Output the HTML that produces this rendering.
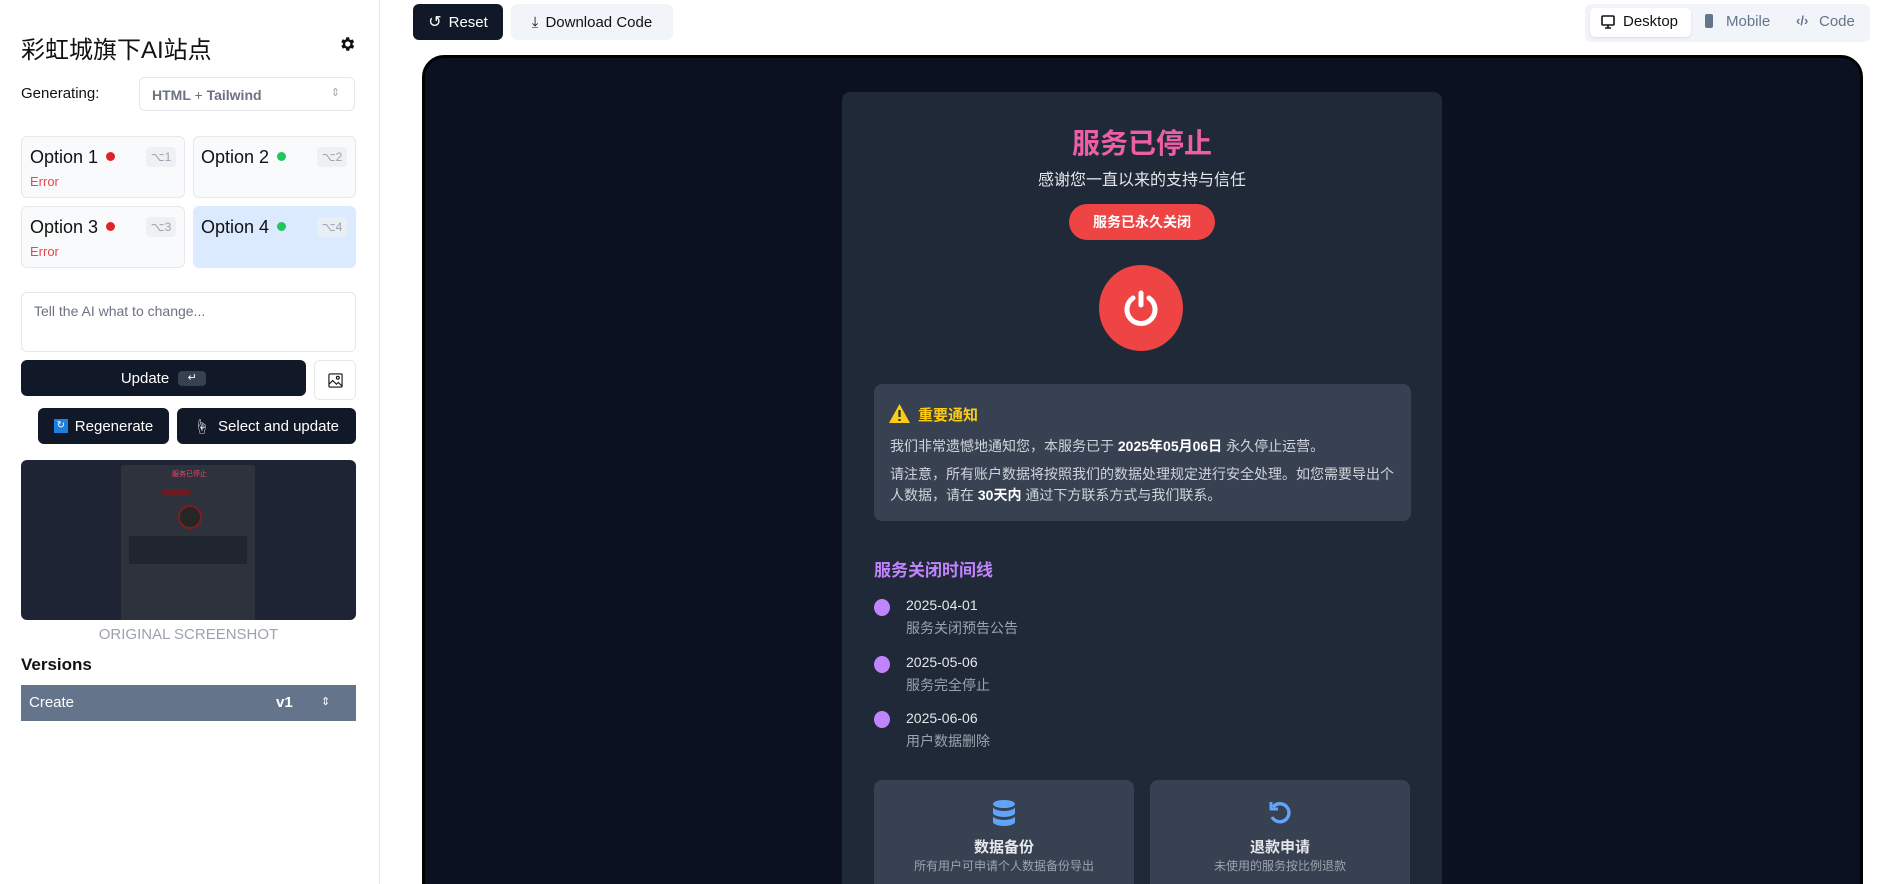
<!DOCTYPE html>
<html><head><meta charset="utf-8"><style>
*{box-sizing:border-box;margin:0;padding:0}
html,body{width:1886px;height:884px;overflow:hidden}
body{background:#fff;font-family:"Liberation Sans","Noto Sans CJK SC",sans-serif;color:#111}
#w{position:relative;width:1886px;height:884px;overflow:hidden}
.a{position:absolute}
.side{left:0;top:0;width:380px;height:884px;border-right:1px solid #e5e7eb}
.card{border:1px solid #e5e7eb;border-radius:6px;background:#f8fafc}
.opt{font-size:18px;color:#111}
.dot{display:inline-block;width:9px;height:9px;border-radius:50%;margin-left:8px;vertical-align:middle;position:relative;top:-2px}
.kbd{background:#eef0f3;color:#9ca3af;font-size:12px;border-radius:4px;width:30px;height:20px;text-align:center;line-height:20px}
.err{color:#ef4444;font-size:13px}
.btn{background:#111827;color:#fff;border-radius:6px;font-size:15px;display:flex;align-items:center;justify-content:center}
.cjk{font-family:"Liberation Sans","Noto Sans CJK SC",sans-serif}
.tl{color:#e5e7eb;font-size:14px}
.td{color:#9ca3af;font-size:14px}
</style></head><body><div id="w">
<div class="a side"></div>
<div class="a" style="left:21px;top:30px;font-size:24px;color:#111">彩虹城旗下AI站点</div>
<svg class="a" style="left:338px;top:35px" width="18" height="18" viewBox="0 0 24 24"><path fill="#111" d="M19.4 13a7.5 7.5 0 000-2l2.1-1.6-2-3.5-2.5 1a7.6 7.6 0 00-1.7-1L15 3h-4l-.4 2.7a7.6 7.6 0 00-1.7 1l-2.5-1-2 3.5L6.6 11a7.5 7.5 0 000 2l-2.1 1.6 2 3.5 2.5-1a7.6 7.6 0 001.7 1L11 21h4l.4-2.7a7.6 7.6 0 001.7-1l2.5 1 2-3.5zM13 15.5a3.5 3.5 0 110-7 3.5 3.5 0 010 7z"/></svg>
<div class="a" style="left:21px;top:85px;font-size:15px">Generating:</div>
<div class="a" style="left:139px;top:77px;width:216px;height:34px;border:1px solid #e5e7eb;border-radius:6px;font-size:14px;font-weight:bold;color:#6b7280;padding:9px 12px">HTML <span style="font-weight:normal">+</span> Tailwind<span style="position:absolute;right:14px;top:8px;font-size:11px;color:#aaa;font-weight:normal">⇕</span></div>

<div class="a card" style="left:21px;top:136px;width:164px;height:62px"></div>
<div class="a opt" style="left:30px;top:147px">Option 1<span class="dot" style="background:#dc2626"></span></div>
<div class="a kbd" style="left:146px;top:147px">⌥1</div>
<div class="a err" style="left:30px;top:174px">Error</div>
<div class="a card" style="left:193px;top:136px;width:163px;height:62px"></div>
<div class="a opt" style="left:201px;top:147px">Option 2<span class="dot" style="background:#22c55e"></span></div>
<div class="a kbd" style="left:317px;top:147px">⌥2</div>
<div class="a card" style="left:21px;top:206px;width:164px;height:62px"></div>
<div class="a opt" style="left:30px;top:217px">Option 3<span class="dot" style="background:#dc2626"></span></div>
<div class="a kbd" style="left:146px;top:217px">⌥3</div>
<div class="a err" style="left:30px;top:244px">Error</div>
<div class="a card" style="left:193px;top:206px;width:163px;height:62px;background:#dbeafe;border-color:#dbeafe"></div>
<div class="a opt" style="left:201px;top:217px">Option 4<span class="dot" style="background:#22c55e"></span></div>
<div class="a kbd" style="left:317px;top:217px;background:#e9eef5">⌥4</div>

<div class="a" style="left:21px;top:292px;width:335px;height:60px;border:1px solid #e5e7eb;border-radius:6px;padding:10px 12px;font-size:14px;color:#6b7280">Tell the AI what to change...</div>
<div class="a btn" style="left:21px;top:360px;width:285px;height:36px">Update<span style="background:#374151;border-radius:4px;width:28px;height:15px;margin-left:9px;font-size:11px;line-height:15px;text-align:center">↵</span></div>
<div class="a" style="left:314px;top:360px;width:42px;height:40px;border:1px solid #e5e7eb;border-radius:6px"><svg style="margin:12px 13px" width="15" height="15" viewBox="0 0 16 16" fill="none" stroke="#111" stroke-width="1.2"><rect x="1" y="1" width="14" height="14" rx="1"/><circle cx="10.5" cy="5" r="1.5"/><path d="M1 12l4-4 4 4 2-2 4 4"/></svg></div>
<div class="a btn" style="left:38px;top:408px;width:131px;height:36px"><span style="background:#1d7fe0;width:14px;height:14px;font-size:10px;line-height:14px;text-align:center;margin-right:7px">↻</span>Regenerate</div>
<div class="a btn" style="left:177px;top:408px;width:179px;height:36px"><span style="margin-right:9px">☝</span>Select and update</div>

<div class="a" style="left:21px;top:460px;width:335px;height:160px;border-radius:6px;background:#1e2433;overflow:hidden">
<div class="a" style="left:100px;top:5px;width:134px;height:160px;background:#2d323d;border-radius:3px"></div>
<div class="a" style="left:151px;top:9px;font-size:7px;color:#e8496a">服务已停止</div>
<div class="a" style="left:140px;top:29px;width:30px;height:7px;background:#6b1c22;border-radius:4px"></div>
<div class="a" style="left:157px;top:45px;width:24px;height:24px;background:#262626;border:2px solid #7f1d1d;border-radius:50%"></div>
<div class="a" style="left:108px;top:76px;width:118px;height:28px;background:#202530"></div>
</div>
<div class="a" style="left:21px;top:626px;width:335px;text-align:center;font-size:15px;color:#9ca3af">ORIGINAL SCREENSHOT</div>
<div class="a" style="left:21px;top:655px;font-size:17px;font-weight:bold">Versions</div>
<div class="a" style="left:21px;top:685px;width:335px;height:36px;background:#64748b;color:#fff;font-size:15px;padding:9px 8px">Create<span style="position:absolute;left:255px;font-weight:bold">v1</span><span style="position:absolute;left:300px;font-size:11px;top:10px">⇕</span></div>

<!-- top bar -->
<div class="a btn" style="left:413px;top:4px;width:90px;height:36px;font-size:15px"><span style="margin-right:7px;font-size:16px">↺</span>Reset</div>
<div class="a" style="left:511px;top:4px;width:162px;height:36px;background:#f1f5f9;border-radius:6px;font-size:15px;display:flex;align-items:center;justify-content:center"><span style="margin-right:7px">⤓</span>Download Code</div>
<div class="a" style="left:1585px;top:4px;width:285px;height:38px;background:#f1f5f9;border-radius:6px"></div>
<div class="a" style="left:1590px;top:8px;width:101px;height:29px;background:#fff;border-radius:5px;box-shadow:0 1px 2px rgba(0,0,0,.1)"></div>
<svg class="a" style="left:1601px;top:15px" width="14" height="14" viewBox="0 0 14 14" fill="none" stroke="#111" stroke-width="1.6"><rect x="1" y="1" width="12" height="9" rx="1"/><path d="M7 10v3M4 13h6"/></svg>
<div class="a" style="left:1623px;top:13px;font-size:15px">Desktop</div>
<div class="a" style="left:1705px;top:14px;width:8px;height:14px;background:#64748b;border-radius:2px"></div>
<div class="a" style="left:1726px;top:13px;font-size:15px;color:#64748b">Mobile</div>
<div class="a" style="left:1796px;top:13px;font-size:13px;color:#64748b;font-weight:bold">‹/›</div>
<div class="a" style="left:1819px;top:13px;font-size:15px;color:#64748b">Code</div>

<!-- preview -->
<div class="a" style="left:422px;top:55px;width:1441px;height:860px;background:#0b1120;border:3px solid #000;border-radius:22px"></div>
<div class="a" style="left:842px;top:92px;width:600px;height:820px;background:#1f2937;border-radius:8px"></div>
<div class="a cjk" style="left:842px;top:122px;width:600px;text-align:center;font-size:28px;font-weight:bold;color:#ec5fa4">服务已停止</div>
<div class="a cjk" style="left:842px;top:166px;width:600px;text-align:center;font-size:16px;color:#e5e7eb">感谢您一直以来的支持与信任</div>
<div class="a cjk" style="left:1069px;top:204px;width:146px;height:36px;background:#ef4444;border-radius:18px;color:#fff;font-weight:bold;font-size:14px;text-align:center;line-height:36px">服务已永久关闭</div>
<div class="a" style="left:1099px;top:265px;width:84px;height:86px;border-radius:50%;background:#ef4444"></div>
<svg class="a" style="left:1121px;top:288px" width="40" height="40" viewBox="0 0 40 40" fill="none" stroke="#fff" stroke-width="5" stroke-linecap="round"><path d="M20 5v12"/><path d="M12 10a14 14 0 1 0 16 0"/></svg>

<div class="a" style="left:874px;top:384px;width:537px;height:137px;background:#374151;border-radius:8px"></div>
<svg class="a" style="left:889px;top:404px" width="21" height="19" viewBox="0 0 21 19"><path d="M10.5 0L21 19H0z" fill="#facc15"/><path d="M10.5 6v7M10.5 15v2" stroke="#1f2937" stroke-width="2.2"/></svg>
<div class="a cjk" style="left:918px;top:404px;font-size:15px;font-weight:bold;color:#facc15">重要通知</div>
<div class="a cjk" style="left:890px;top:436px;font-size:14px;color:#d1d5db">我们非常遗憾地通知您，本服务已于 <b style="color:#fff">2025年05月06日</b> 永久停止运营。</div>
<div class="a cjk" style="left:890px;top:464px;width:510px;font-size:14px;line-height:21px;color:#d1d5db">请注意，所有账户数据将按照我们的数据处理规定进行安全处理。如您需要导出个人数据，请在 <b style="color:#fff">30天内</b> 通过下方联系方式与我们联系。</div>

<div class="a cjk" style="left:874px;top:556px;font-size:17px;font-weight:bold;color:#c084fc">服务关闭时间线</div>
<div class="a" style="left:874px;top:599px;width:16px;height:17px;border-radius:50%;background:#c084fc"></div>
<div class="a tl" style="left:906px;top:597px">2025-04-01</div>
<div class="a td cjk" style="left:906px;top:618px">服务关闭预告公告</div>
<div class="a" style="left:874px;top:656px;width:16px;height:17px;border-radius:50%;background:#c084fc"></div>
<div class="a tl" style="left:906px;top:654px">2025-05-06</div>
<div class="a td cjk" style="left:906px;top:675px">服务完全停止</div>
<div class="a" style="left:874px;top:711px;width:16px;height:17px;border-radius:50%;background:#c084fc"></div>
<div class="a tl" style="left:906px;top:710px">2025-06-06</div>
<div class="a td cjk" style="left:906px;top:731px">用户数据删除</div>

<div class="a" style="left:874px;top:780px;width:260px;height:140px;background:#374151;border-radius:8px"></div>
<div class="a" style="left:1150px;top:780px;width:260px;height:140px;background:#374151;border-radius:8px"></div>
<svg class="a" style="left:993px;top:800px" width="22" height="26" viewBox="0 0 22 26" fill="#60a5fa"><ellipse cx="11" cy="4" rx="11" ry="4"/><path d="M0 7c0 2 5 4 11 4s11-2 11-4v6c0 2-5 4-11 4S0 15 0 13z"/><path d="M0 16c0 2 5 4 11 4s11-2 11-4v6c0 2-5 4-11 4S0 24 0 22z"/></svg>
<svg class="a" style="left:1267px;top:800px" width="26" height="26" viewBox="0 0 26 26" fill="none" stroke="#60a5fa" stroke-width="3.4"><path d="M6 7a9 9 0 1 1-1 10"/><path d="M4 2v7h7" stroke-width="3"/></svg>
<div class="a cjk" style="left:874px;top:836px;width:260px;text-align:center;font-size:15px;font-weight:bold;color:#e5e7eb">数据备份</div>
<div class="a cjk" style="left:874px;top:857px;width:260px;text-align:center;font-size:12px;color:#9ca3af">所有用户可申请个人数据备份导出</div>
<div class="a cjk" style="left:1150px;top:836px;width:260px;text-align:center;font-size:15px;font-weight:bold;color:#e5e7eb">退款申请</div>
<div class="a cjk" style="left:1150px;top:857px;width:260px;text-align:center;font-size:12px;color:#9ca3af">未使用的服务按比例退款</div>
</div></body></html>
